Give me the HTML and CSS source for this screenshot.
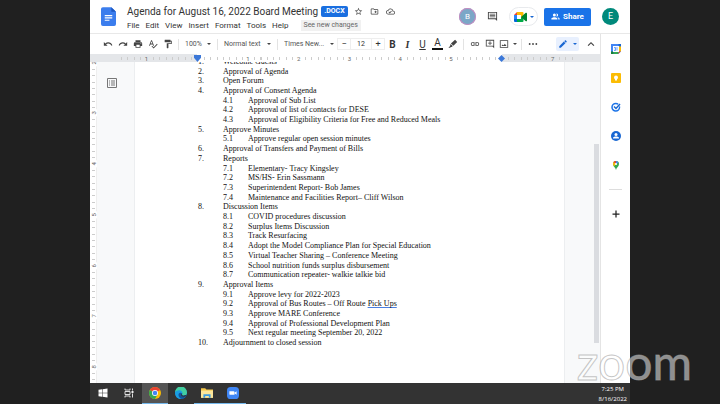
FILE: index.html
```html
<!DOCTYPE html>
<html lang="en">
<head>
  <meta charset="UTF-8">
  <meta name="viewport" content="width=device-width, initial-scale=1.0">
  <title>Agenda for August 16, 2022 Board Meeting</title>
  <link rel="stylesheet" href="styles.css">
</head>
<body>
  <div class="screen">
    <header class="header">
      <svg class="doc-logo" viewBox="0 0 16 20">
        <path d="M2 0h9l5 5v13a2 2 0 0 1-2 2H2a2 2 0 0 1-2-2V2a2 2 0 0 1 2-2z" fill="#3b7ded"/>
        <path d="M11 0l5 5h-5z" fill="#1b56c0"/>
        <path d="M4 9h8M4 11.500h8M4 14h5" stroke="#fff" stroke-width="1.300"/>
      </svg>
      <div class="heading">
        <div class="title-row">
          <h1>Agenda for August 16, 2022 Board Meeting</h1>
          <span class="badge">.DOCX</span>
          <button class="icon-btn" aria-label="Star"><svg viewBox="0 0 24 24"><path d="M22 9.240l-7.190-.62L12 2 9.190 8.630 2 9.240l5.460 4.730L5.820 21 12 17.270 18.180 21l-1.630-7.030L22 9.240zM12 15.400l-3.760 2.270 1-4.280-3.320-2.880 4.380-.38L12 6.100l1.710 4.040 4.380.38-3.320 2.880 1 4.280L12 15.400z"/></svg></button>
          <button class="icon-btn" aria-label="Move"><svg viewBox="0 0 24 24"><path d="M20 6h-8l-2-2H4c-1.100 0-2 .9-2 2v12c0 1.100.9 2 2 2h16c1.100 0 2-.9 2-2V8c0-1.100-.9-2-2-2zm0 12H4V6h5.200l2 2H20v10zM12 12h2v-2h2v2h2v2h-2v2h-2v-2h-2z"/></svg></button>
          <button class="icon-btn" aria-label="Document status"><svg viewBox="0 0 24 24"><path d="M19.350 10.040C18.670 6.590 15.640 4 12 4 9.110 4 6.600 5.640 5.350 8.040 2.340 8.360 0 10.910 0 14c0 3.310 2.690 6 6 6h13c2.760 0 5-2.240 5-5 0-2.640-2.050-4.780-4.650-4.960zM19 18H6c-2.210 0-4-1.790-4-4s1.790-4 4-4h.71C7.370 7.690 9.480 6 12 6c3.040 0 5.500 2.460 5.500 5.500v.5H19c1.660 0 3 1.340 3 3s-1.340 3-3 3zM10 14.200l-2-2-1.400 1.400L10 17l5.500-5.500-1.400-1.400z"/></svg></button>
        </div>
        <nav class="menu">
          <button>File</button>
          <button>Edit</button>
          <button>View</button>
          <button>Insert</button>
          <button>Format</button>
          <button>Tools</button>
          <button>Help</button>
          <button class="changes">See new changes</button>
        </nav>
      </div>
      <div class="account">
        <span class="avatar viewer">B</span>
        <button class="comments" aria-label="Comments"><svg viewBox="0 0 24 24"><path d="M2 2h20v20l-4-4H2zm2 2v12h16V4zM6 6h12v1.700H6zm0 3h12v1.700H6zm0 3h12v1.700H6z"/></svg></button>
        <button class="meet" aria-label="Meet">
          <svg viewBox="0 0 26 20">
            <path d="M6 0v6H0z" fill="#ea4335"/>
            <path d="M0 6h6v8H0z" fill="#2684fc"/>
            <path d="M0 14h6v6H2a2 2 0 0 1-2-2z" fill="#0066da"/>
            <path d="M6 0h11a2 2 0 0 1 2 2v6l-5 4V6H6z" fill="#ffba00"/>
            <path d="M6 14h8v-3l5-4v11a2 2 0 0 1-2 2H6z" fill="#00ac47"/>
            <path d="M14 10l9-8c1-1 3-1 3 1v14c0 2-2 2-3 1z" fill="#00832d"/>
          </svg>
          <i class="caret"></i>
        </button>
        <button class="share">
          <svg viewBox="0 0 24 24"><path d="M9 12a4 4 0 1 0 0-8 4 4 0 0 0 0 8zm0 2c-3 0-8 1.500-8 4v2h16v-2c0-2.500-5-4-8-4zM15 12a4 4 0 0 0 0-8l-1 .2c2 2.300 2 5.300 0 7.600zM17 14.300c1.500 1 2.500 2.200 2.500 3.700v2H23v-2c0-2-3-3.300-6-3.700z"/></svg>
          Share
        </button>
        <span class="avatar owner">E</span>
      </div>
    </header>

    <div class="workspace">
      <div class="editor">
        <div class="toolbar">
          <button class="tool" aria-label="Undo"><svg viewBox="0 0 24 24"><path d="M12.500 8c-2.650 0-5.050.99-6.900 2.600L2 7v9h9l-3.620-3.620c1.390-1.160 3.160-1.880 5.120-1.880 3.540 0 6.550 2.310 7.600 5.500l2.370-.78C21.080 11.030 17.150 8 12.500 8z"/></svg></button>
          <button class="tool" aria-label="Redo"><svg viewBox="0 0 24 24"><path d="M18.400 10.600C16.550 8.990 14.150 8 11.500 8c-4.650 0-8.580 3.030-9.960 7.220L3.900 16c1.050-3.190 4.050-5.500 7.600-5.500 1.950 0 3.730.72 5.120 1.880L13 16h9V7l-3.600 3.600z"/></svg></button>
          <button class="tool" aria-label="Print"><svg viewBox="0 0 24 24"><path d="M19 8H5c-1.660 0-3 1.340-3 3v6h4v4h12v-4h4v-6c0-1.660-1.340-3-3-3zm-3 11H8v-5h8v5zm3-7c-.55 0-1-.45-1-1s.45-1 1-1 1 .45 1 1-.45 1-1 1zm-1-9H6v4h12V3z"/></svg></button>
          <button class="tool" aria-label="Spelling"><svg viewBox="0 0 24 24"><path d="M12.450 16h2.090L9.430 3H7.570L2.460 16h2.090l1.120-3h5.640l1.140 3zm-6.020-5L8.500 5.480 10.570 11H6.430zm15.160.59l-8.090 8.090L9.830 16l-1.410 1.410 5.090 5.090L23 13l-1.410-1.410z"/></svg></button>
          <button class="tool" aria-label="Paint format"><svg viewBox="0 0 24 24"><path d="M18 4V3c0-.55-.45-1-1-1H5c-.55 0-1 .45-1 1v4c0 .55.45 1 1 1h12c.55 0 1-.45 1-1V6h1v4H9v11c0 .55.45 1 1 1h2c.55 0 1-.45 1-1v-9h8V4h-3z"/></svg></button>
          <i class="sep"></i>
          <label class="select zoom-level"><select aria-label="Zoom"><option>100%</option></select></label>
          <i class="sep"></i>
          <label class="select"><select aria-label="Styles"><option>Normal text</option></select></label>
          <i class="sep"></i>
          <label class="select font-name"><select aria-label="Font"><option>Times New...</option></select></label>
          <div class="font-size">
            <button aria-label="Decrease font size">−</button>
            <input type="text" value="12" aria-label="Font size">
            <button aria-label="Increase font size">+</button>
          </div>
          <button class="tool letter"><b>B</b></button>
          <button class="tool letter serif"><em>I</em></button>
          <button class="tool letter"><u>U</u></button>
          <button class="tool letter"><span class="ink">A</span></button>
          <button class="tool" aria-label="Highlight color"><svg viewBox="0 0 24 24"><path d="M17 2l5 5-9 9-6-5zM6 12l5.500 5-2.500 2H7l-2 2H1l4-4z"/></svg></button>
          <i class="sep"></i>
          <button class="tool" aria-label="Insert link"><svg viewBox="0 0 24 24"><path d="M3.900 12c0-1.710 1.390-3.100 3.100-3.100h4V7H7c-2.760 0-5 2.240-5 5s2.240 5 5 5h4v-1.900H7c-1.710 0-3.100-1.390-3.100-3.100zM8 13h8v-2H8v2zm9-6h-4v1.900h4c1.710 0 3.100 1.390 3.100 3.100s-1.390 3.100-3.100 3.100h-4V17h4c2.760 0 5-2.240 5-5s-2.240-5-5-5z"/></svg></button>
          <button class="tool" aria-label="Add comment"><svg viewBox="0 0 24 24"><path d="M2 2h20v20l-4-4H2zm2 2v12h16V4zM11 5.500h2V9h3.500v2H13v3.500h-2V11H7.500V9H11z"/></svg></button>
          <button class="tool image" aria-label="Insert image"><svg viewBox="0 0 24 24"><path d="M2 3h20v18H2zm2 2v14h16V5zM6 17l3-4 2 2.500 3-4 4 5.500z"/></svg><i class="caret"></i></button>
          <i class="sep"></i>
          <button class="tool" aria-label="More"><svg viewBox="0 0 24 24"><circle cx="4" cy="12" r="2.200"/><circle cx="12" cy="12" r="2.200"/><circle cx="20" cy="12" r="2.200"/></svg></button>
          <button class="mode" aria-label="Editing mode"><svg viewBox="0 0 24 24"><path d="M3 17.250V21h3.750L17.810 9.940l-3.750-3.750L3 17.250zM20.710 7.040c.39-.39.39-1.020 0-1.410l-2.340-2.340c-.39-.39-1.020-.39-1.410 0l-1.830 1.830 3.750 3.750 1.830-1.830z"/></svg><i class="caret"></i></button>
          <button class="tool" aria-label="Hide the menus"><svg viewBox="0 0 24 24"><path d="M12 7l-8 8 2 2 6-6 6 6 2-2z"/></svg></button>
        </div>

        <div class="ruler">
          <div class="scale">
            <span class="outside"><b>1</b></span>
            <span class="edge"><svg class="indent" viewBox="0 0 8 8"><path d="M0 0h8v3L4 8 0 3z"/></svg></span>
            <span><b>1</b></span>
            <span><b>2</b></span>
            <span><b>3</b></span>
            <span><b>4</b></span>
            <span><b>5</b></span>
            <span class="edge right"><svg class="indent" viewBox="0 0 8 8"><path d="M4 0l4 4-4 4-4-4z"/></svg></span>
            <span class="outside"><b>7</b></span>
          </div>
        </div>

        <div class="canvas">
          <div class="side-ruler">
            <div class="side-scale">
              <span><b>2</b></span>
              <span><b>3</b></span>
              <span><b>4</b></span>
              <span><b>5</b></span>
              <span><b>6</b></span>
              <span><b>7</b></span>
              <span><b>8</b></span>
            </div>
          </div>
          <div class="gutter">
            <button class="outline" aria-label="Show document outline"><svg viewBox="0 0 20 20"><path d="M1 1h18v18H1z" fill="none" stroke="#777" stroke-width="2"/><path d="M4 6h2M8 6h8M4 10h2M8 10h8M4 14h2M8 14h8" stroke="#777" stroke-width="2"/></svg></button>
          </div>
          <main class="page">
            <ul class="agenda">
              <li><span>1.</span>Welcome Guests</li>
              <li><span>2.</span>Approval of Agenda</li>
              <li><span>3.</span>Open Forum</li>
              <li><span>4.</span>Approval of Consent Agenda</li>
              <li class="sub"><span>4.1</span>Approval of Sub List</li>
              <li class="sub"><span>4.2</span>Approval of list of contacts for DESE</li>
              <li class="sub"><span>4.3</span>Approval of Eligibility Criteria for Free and Reduced Meals</li>
              <li><span>5.</span>Approve Minutes</li>
              <li class="sub"><span>5.1</span>Approve regular open session minutes</li>
              <li><span>6.</span>Approval of Transfers and Payment of Bills</li>
              <li><span>7.</span>Reports</li>
              <li class="sub"><span>7.1</span>Elementary- Tracy Kingsley</li>
              <li class="sub"><span>7.2</span>MS/HS- Erin Sassmann</li>
              <li class="sub"><span>7.3</span>Superintendent Report- Bob James</li>
              <li class="sub"><span>7.4</span>Maintenance and Facilities Report– Cliff Wilson</li>
              <li><span>8.</span>Discussion Items</li>
              <li class="sub"><span>8.1</span>COVID procedures discussion</li>
              <li class="sub"><span>8.2</span>Surplus Items Discussion</li>
              <li class="sub"><span>8.3</span>Track Resurfacing</li>
              <li class="sub"><span>8.4</span>Adopt the Model Compliance Plan for Special Education</li>
              <li class="sub"><span>8.5</span>Virtual Teacher Sharing – Conference Meeting</li>
              <li class="sub"><span>8.6</span>School nutrition funds surplus disbursement</li>
              <li class="sub"><span>8.7</span>Communication repeater- walkie talkie bid</li>
              <li><span>9.</span>Approval Items</li>
              <li class="sub"><span>9.1</span>Approve levy for 2022-2023</li>
              <li class="sub"><span>9.2</span><p>Approval of Bus Routes – Off Route <u>Pick Ups</u></p></li>
              <li class="sub"><span>9.3</span>Approve MARE Conference</li>
              <li class="sub"><span>9.4</span>Approval of Professional Development Plan</li>
              <li class="sub"><span>9.5</span>Next regular meeting September 20, 2022</li>
              <li><span>10.</span>Adjournment to closed session</li>
            </ul>
          </main>
          <div class="scroll"><div class="thumb"></div></div>
        </div>
      </div>

      <aside class="addons">
        <button aria-label="Calendar"><svg viewBox="0 0 20 20"><path d="M0 0h20v20H0z" fill="#4285f4"/><path d="M15 0h5v5h-5z" fill="#1967d2"/><path d="M15 5h5v10h-5z" fill="#fbbc04"/><path d="M5 15h10v5H5z" fill="#34a853"/><path d="M0 15h5v5H0z" fill="#188038"/><path d="M15 15h5l-5 5z" fill="#ea4335"/><path d="M20 15v5h-5z" fill="#fff"/><path d="M4 4h12v12H4z" fill="#fff"/><path d="M6 7h3v6H6M7 10h2M12 13V7l-1 1" fill="none" stroke="#4285f4" stroke-width="1.500"/></svg></button>
        <button aria-label="Keep"><svg viewBox="0 0 20 20"><rect width="20" height="20" rx="2" fill="#fbbc04"/><circle cx="10" cy="9" r="4" fill="#fff"/><path d="M8 12h4v3H8z" fill="#fff"/></svg></button>
        <button aria-label="Tasks"><svg viewBox="0 0 20 20"><circle cx="9.500" cy="10.500" r="7.500" fill="none" stroke="#1a73e8" stroke-width="3"/><path d="M6 9l4 4 8-9" fill="none" stroke="#fff" stroke-width="5"/><path d="M6 9l4 4 8-9" fill="none" stroke="#1967d2" stroke-width="3"/></svg></button>
        <button aria-label="Contacts"><svg viewBox="0 0 20 20"><circle cx="10" cy="10" r="10" fill="#1967d2"/><circle cx="10" cy="7" r="3" fill="#fff"/><path d="M4 14c0-2 3-3 6-3s6 1 6 3v1H4z" fill="#fff"/></svg></button>
        <button aria-label="Maps"><svg viewBox="0 0 20 20"><path d="M10 20c-1-5-6-7-6-12a6 6 0 0 1 12 0c0 5-5 7-6 12z" fill="#34a853"/><path d="M4.500 10A6 6 0 0 1 6 3l4 5-4 5z" fill="#fbbc04"/><path d="M5 4a6 6 0 0 1 5-2v6z" fill="#ea4335"/><path d="M10 2a6 6 0 0 1 5 3l-5 4z" fill="#4285f4"/><circle cx="10" cy="8" r="2.200" fill="#fff"/></svg></button>
        <hr>
        <button aria-label="Get add-ons"><svg viewBox="0 0 20 20"><path d="M10 3v14M3 10h14" stroke="#222" stroke-width="2.500"/></svg></button>
      </aside>
    </div>

    <footer class="taskbar">
      <button aria-label="Start"><svg viewBox="0 0 20 20"><path d="M1 3.500l7-1v7H1zM9 2.300L19 1v8.500H9zM1 10.500h7v7l-7-1zM9 10.500h10V19L9 17.700z" fill="#fff"/></svg></button>
      <button aria-label="Task view"><svg viewBox="0 0 20 20"><path d="M2 1v3h10V1M2 19v-3h10v3M2 7h10v6H2zM17 1v4M17 11v8" fill="none" stroke="#eee" stroke-width="1.800"/><path d="M15 6h4v4h-4z" fill="#eee"/></svg></button>
      <button class="open active" aria-label="Chrome"><svg viewBox="0 0 20 20"><circle cx="10" cy="10" r="10" fill="#fbbc04"/><path d="M10 10L1.340 5a10 10 0 0 1 17.320 0z" fill="#ea4335"/><path d="M10 10L1.340 5A10 10 0 0 0 10 20l4-7z" fill="#34a853"/><circle cx="10" cy="10" r="5" fill="#fff"/><circle cx="10" cy="10" r="3.800" fill="#4285f4"/></svg></button>
      <button aria-label="Edge"><svg viewBox="0 0 20 20"><circle cx="10" cy="10" r="10" fill="#0f7fd0"/><path d="M0 9a10 10 0 0 1 20 0c0 4-3 5.500-6 5.500-2 0-3-1-2-2.500 1-3-2-5-5-5C4 7 1 8 0 9z" fill="#43cfa0"/><path d="M0 9c2-3 5-4 8-3.500 3 .5 5 3 4 6-2-3-6-2-6 2 0 3 2 5 4 6.500C4 20 0 15 0 9z" fill="#1b9de2"/><path d="M12 11.500c-1 1.500 0 3 2 3 2 0 4-.5 5-1.500-1 4-4 6.500-8 6.500-3-1-5-3-5-6 0-4 4-5 6-2z" fill="#12559d"/><path d="M11.500 11c-.5 2 .5 3.500 2.500 3.500l5-1-1 2c-3 1.500-8 .5-8-2.500z" fill="#333"/></svg></button>
      <button class="open" aria-label="File Explorer"><svg viewBox="0 0 20 20"><path d="M0 2h7l2 2h11v14H0z" fill="#f5c84c"/><path d="M0 6h20v12H0z" fill="#fde69a"/><path d="M4 18v-6h12v6h-3v-3H7v3z" fill="#3d9be0"/></svg></button>
      <button class="open" aria-label="Zoom"><svg viewBox="0 0 20 20"><rect width="20" height="20" rx="6" fill="#3f86f5"/><path d="M4 7h7a1.500 1.500 0 0 1 1.500 1.500V13h-7A1.500 1.500 0 0 1 4 11.500zM13 9l3-2v6l-3-2z" fill="#fff"/></svg></button>
      <div class="clock"><span>7:25 PM</span><span>8/16/2022</span></div>
    </footer>
  </div>
  <div class="watermark">zoom</div>
</body>
</html>
```
FILE: styles.css
```css
* {
  box-sizing: border-box;
}

body {
  margin: 0;
  background: #202020;
  color: #333;
  font-family: Roboto, "Liberation Sans", sans-serif;
  font-size: 8px;
  overflow: hidden;
}

button, input, select {
  font: inherit;
  color: inherit;
  border: 0;
  padding: 0;
  margin: 0;
  background: none;
}

button {
  display: flex;
  align-items: center;
  justify-content: center;
  cursor: pointer;
}

svg {
  display: block;
  fill: #444;
}

.screen {
  width: 75%;
  height: 100vh;
  margin: 0 auto;
  display: flex;
  flex-direction: column;
  background: #fff;
}

/* header */
.header {
  display: flex;
  align-items: center;
  height: 34px;
  padding: 0 11px;
  border-bottom: 1px solid #e8e8e8;
}

.doc-logo {
  width: 15px;
  height: 19px;
}

.heading {
  margin-left: 11px;
}

.title-row, .menu, .account {
  display: flex;
  align-items: center;
}

.title-row {
  height: 14px;
  margin-top: 3px;
}

h1 {
  margin: 0 3px 0 0;
  font-size: 10px;
  font-weight: 400;
  white-space: nowrap;
}

.badge {
  padding: 0 3px;
  margin-right: 3px;
  border-radius: 2px;
  background: #1a6fe0;
  color: #fff;
  font-size: 7px;
  font-weight: 700;
  line-height: 11px;
}

.icon-btn {
  width: 16px;
}

.icon-btn svg {
  width: 9px;
  height: 9px;
}

.menu {
  gap: 6px;
  height: 14px;
}

.changes {
  height: 11px;
  padding: 0 3px;
  margin-left: 6px;
  background: #f1f1f1;
  color: #666;
  font-size: 7px;
}

.account {
  margin-left: auto;
}

.avatar {
  width: 17px;
  line-height: 17px;
  border-radius: 50%;
  text-align: center;
  color: #fff;
}

.viewer {
  background: #7ba7c7;
  box-shadow: 0 0 0 1px #c78bc0 inset;
}

.comments {
  margin: 0 11px;
}

.comments svg {
  width: 11px;
  height: 11px;
}

.meet {
  gap: 3px;
  width: 29px;
  height: 19px;
  border: 1px solid #e8eaed;
  border-radius: 10px;
}

.meet svg {
  width: 13px;
  height: 10px;
}

.caret {
  border: 2px solid transparent;
  border-top-color: #444;
  border-bottom: 0;
}

.meet .caret, .mode .caret {
  border-top-color: #1967d2;
}

.share {
  gap: 3px;
  width: 47px;
  height: 18px;
  margin: 0 11px 0 6px;
  border-radius: 2px;
  background: #1a73e8;
  color: #fff;
  font-weight: 700;
}

.share svg {
  width: 9px;
  height: 9px;
  fill: #fff;
}

.owner {
  background: #00897b;
  font-size: 9px;
}

/* toolbar */
.workspace {
  display: flex;
  flex: 1;
  min-height: 0;
}

.editor {
  display: flex;
  flex-direction: column;
  flex: 1;
  min-width: 0;
}

.toolbar {
  display: flex;
  align-items: center;
  height: 20px;
  padding: 0 2px 0 10px;
}

.tool {
  width: 15px;
  height: 15px;
}

.tool svg, .mode svg {
  width: 10px;
  height: 10px;
}

.sep {
  width: 1px;
  height: 11px;
  margin: 0 3px;
  background: #e3e3e3;
}

.select {
  display: flex;
  align-items: center;
  width: 53px;
  padding: 0 3px;
  color: #555;
  font-size: 7px;
}

.select::after {
  content: "";
  border: 2px solid transparent;
  border-top-color: #444;
  border-bottom: 0;
}

.select select {
  flex: 1;
  min-width: 0;
  appearance: none;
}

.zoom-level {
  width: 32px;
}

.font-name {
  width: 56px;
}

.font-size {
  display: flex;
  height: 12px;
  border: 1px solid #eee;
}

.font-size button {
  width: 12px;
  font-size: 9px;
}

.font-size input {
  width: 22px;
  border: 1px solid #eee;
  border-width: 0 1px;
  font-size: 7px;
  text-align: center;
}

.letter {
  font-size: 10px;
}

.serif {
  font-family: "Liberation Serif", serif;
  font-weight: 700;
}

.ink {
  width: 11px;
  line-height: 10px;
  border-bottom: 2px solid #111;
}

.image {
  gap: 4px;
  width: 21px;
}

.mode {
  gap: 5px;
  width: 23px;
  height: 14px;
  margin: 0 4px 0 auto;
  border-radius: 2px;
  background: #e8f0fe;
}

.mode svg {
  fill: #1967d2;
}

/* rulers */
.ruler {
  height: 8px;
  overflow: hidden;
  background: #e4e6e9;
}

.scale {
  display: grid;
  grid-template-columns: repeat(9, 1fr);
  width: 457px;
  height: 8px;
  margin-left: 31px;
}

.scale span {
  display: flex;
  align-items: center;
  justify-content: center;
  background: repeating-linear-gradient(90deg, #ccc 0 1px, transparent 1px 12.5%) 0 50% / 100% 3px no-repeat #fff;
}

.scale b, .side-scale b {
  padding: 0 2px;
  background: #fff;
  color: #666;
  font-size: 6px;
  font-weight: 400;
  line-height: 7px;
}

.scale .outside, .outside b {
  background-color: #e4e6e9;
}

.scale .edge {
  background: repeating-linear-gradient(90deg, #ccc 0 1px, transparent 1px 12.5%) 0 50% / 100% 3px no-repeat, linear-gradient(90deg, #e4e6e9 50%, #fff 50%);
}

.scale .right {
  background: repeating-linear-gradient(90deg, #ccc 0 1px, transparent 1px 12.5%) 0 50% / 100% 3px no-repeat, linear-gradient(90deg, #fff 50%, #e4e6e9 50%);
}

.indent {
  width: 7px;
  height: 7px;
  fill: #3c78d8;
}

.canvas {
  display: flex;
  flex: 1;
  min-height: 0;
  overflow: hidden;
  background: #f8f9fa;
}

.side-ruler {
  width: 7px;
  background: #fff;
  border-right: 1px solid #eee;
}

.side-scale {
  display: grid;
  grid-template-rows: repeat(7, 1fr);
  height: 355px;
  margin-top: -25px;
}

.side-scale span {
  display: flex;
  align-items: center;
  justify-content: center;
  background: repeating-linear-gradient(#ccc 0 1px, transparent 1px 12.5%) 50% 0 / 3px 100% no-repeat;
}

.side-scale b {
  writing-mode: vertical-rl;
  transform: rotate(180deg);
  padding: 2px 0;
}

.gutter {
  width: 37px;
  padding: 16px 10px;
}

.outline svg {
  width: 10px;
  height: 10px;
}

/* document */
.page {
  flex: 1;
  padding-left: 63px;
  background: #fff;
  border: 1px solid #eceef0;
  border-width: 0 1px;
}

.agenda {
  display: grid;
  grid-auto-rows: 1fr;
  height: 291px;
  margin: -5px 0 0;
  padding: 0;
  list-style: none;
  color: #111;
  font-family: "Liberation Serif", serif;
  font-size: 8px;
  line-height: 10px;
  white-space: nowrap;
}

.agenda li {
  display: flex;
  align-items: center;
  min-height: 0;
}

.agenda li > span {
  width: 25px;
}

.agenda .sub {
  padding-left: 25px;
}

.agenda p {
  margin: 0;
}

.agenda u {
  text-decoration-color: #4a7fe0;
}

.scroll {
  width: 35px;
  padding-top: 82px;
}

.thumb {
  width: 5px;
  height: 199px;
  margin: 0 1px 0 auto;
  background: #dadce0;
}

/* add-ons */
.addons {
  display: flex;
  flex-direction: column;
  align-items: center;
  gap: 19px;
  width: 30px;
  padding-top: 10px;
  border-left: 1px solid #e4e4e4;
}

.addons svg {
  width: 10px;
  height: 10px;
}

.addons hr {
  width: 13px;
  margin: 0;
  border: 0;
  border-top: 1px solid #ddd;
}

/* taskbar */
.taskbar {
  display: flex;
  height: 21px;
  background: #333;
}

.taskbar button {
  width: 26px;
  border-bottom: 1px solid transparent;
}

.taskbar svg {
  width: 12px;
  height: 12px;
}

.taskbar button:nth-child(-n+2) svg {
  width: 10px;
  height: 10px;
}

.taskbar .open {
  border-bottom-color: #76b9ed;
}

.taskbar .active {
  background: #555;
}

.clock {
  display: flex;
  flex-direction: column;
  align-items: center;
  justify-content: center;
  margin-left: auto;
  padding-right: 3px;
  color: #fff;
  font-family: "Open Sans", sans-serif;
  font-size: 6px;
  line-height: 10px;
}

.watermark {
  position: absolute;
  right: 28px;
  bottom: 18px;
  color: rgba(255, 255, 255, 0.5);
  font-family: Lato, sans-serif;
  font-size: 48px;
  line-height: 48px;
  -webkit-text-stroke: 1px rgba(160, 160, 160, 0.6);
}
```
